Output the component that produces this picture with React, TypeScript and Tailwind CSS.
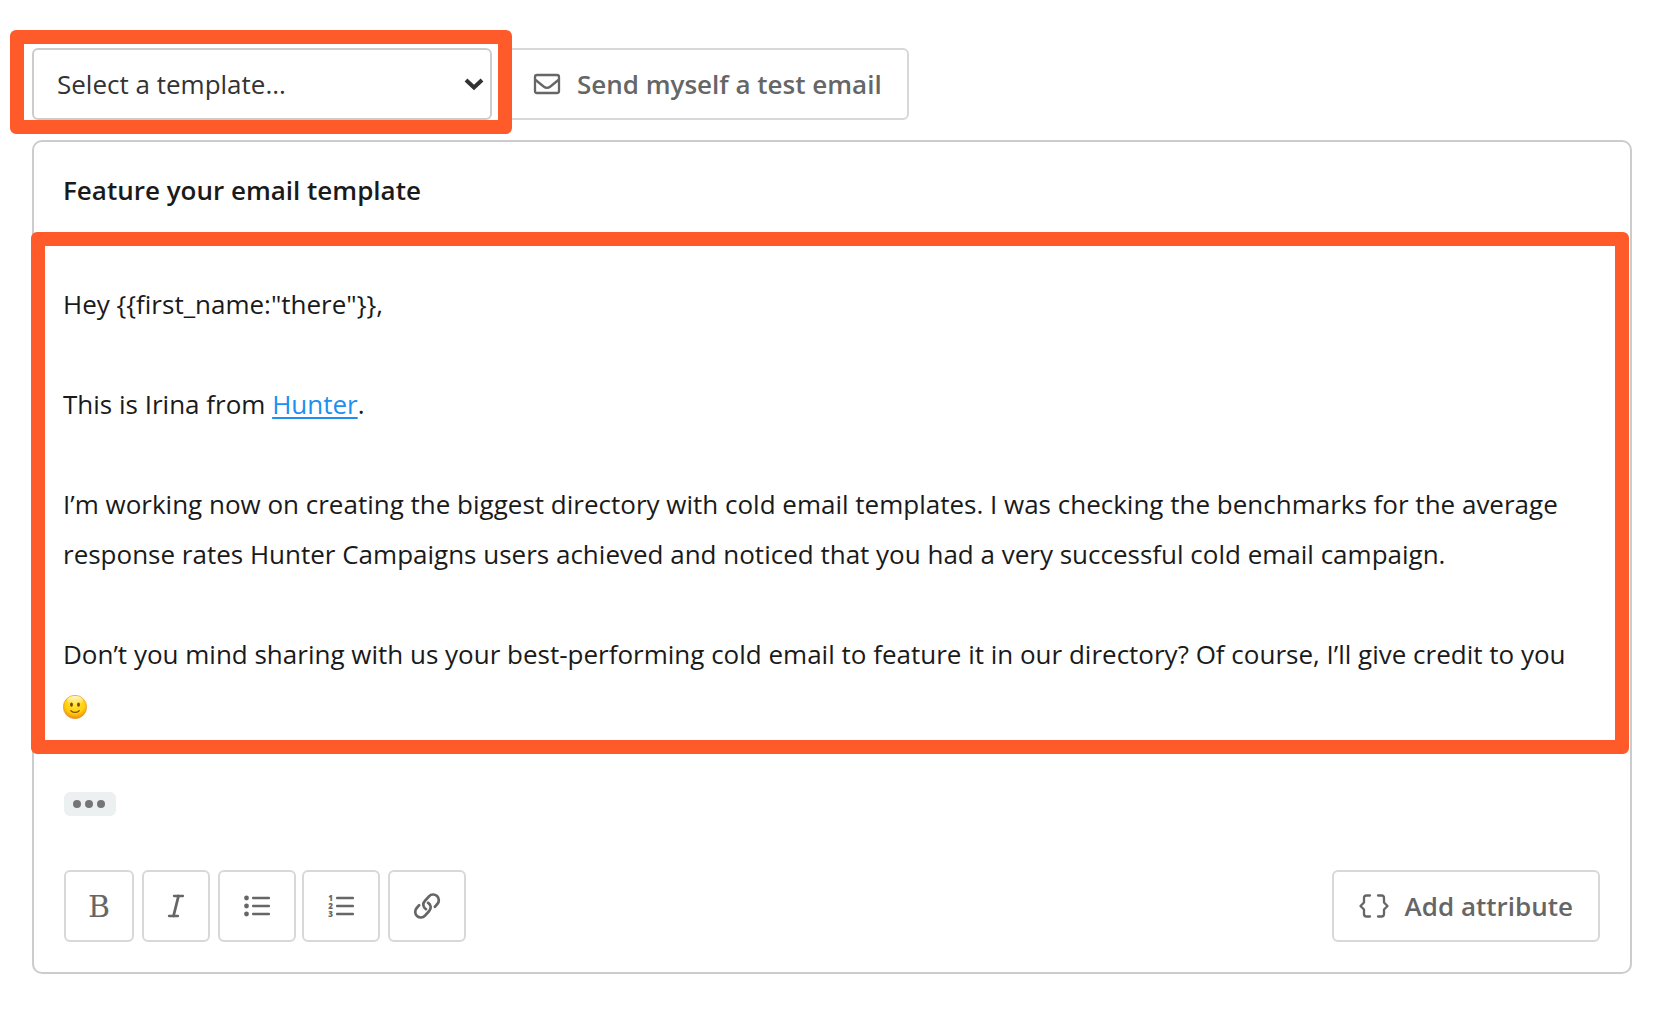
import React, { useState } from "react";

const toolButton = "h-[72px] flex items-center justify-center rounded-md border-2 border-[#d8d8d8] bg-white text-[#666]";

function EnvelopeIcon() {
  return (
    <svg width="28" height="22" viewBox="0 0 28 22" fill="none" stroke="currentColor" strokeWidth="2.3" aria-hidden="true">
      <rect x="2" y="2" width="24" height="18" rx="2" />
      <path d="M2 6.500l8.600 7c2.200 1.700 4.600 1.700 6.800 0L26 6.500" />
    </svg>
  );
}

function ItalicIcon() {
  return (
    <svg width="18" height="24" viewBox="0 0 18 24" fill="none" stroke="currentColor" strokeWidth="2.3" strokeLinecap="round" aria-hidden="true">
      <line x1="7" y1="2" x2="16" y2="2" />
      <line x1="11.500" y1="2" x2="6.500" y2="22" strokeWidth="2.800" />
      <line x1="2" y1="22" x2="11" y2="22" />
    </svg>
  );
}

function BulletListIcon() {
  return (
    <svg width="28" height="24" viewBox="0 0 28 24" fill="currentColor" aria-hidden="true">
      {[4, 12, 20].map((y) => (
        <g key={y}>
          <circle cx="3.5" cy={y} r="2.4" />
          <rect x="9" y={y - 1.2} width="18" height="2.5" rx="1" />
        </g>
      ))}
    </svg>
  );
}

function NumberListIcon() {
  return (
    <svg width="28" height="28" viewBox="0 -2 28 28" fill="currentColor" aria-hidden="true">
      {[4, 12, 20].map((y, i) => (
        <g key={y}>
          <text x="3.5" y={y + 3} textAnchor="middle" className="font-['Open_Sans',sans-serif] text-[8px] font-extrabold">
            {i + 1}
          </text>
          <rect x="9" y={y - 1.2} width="18" height="2.5" rx="1" />
        </g>
      ))}
    </svg>
  );
}

function LinkIcon() {
  return (
    <svg width="28" height="28" viewBox="0 0 28 28" fill="none" stroke="currentColor" strokeWidth="2.7" strokeLinecap="round" aria-hidden="true">
      <path d="M13 17.200A5.200 5.200 0 0 1 11.800 9L16 4.300A5.600 5.600 0 0 1 24.300 12L21.800 14.800" />
      <path d="M15 10.800A5.200 5.200 0 0 1 16.200 19L12 23.700A5.600 5.600 0 0 1 3.700 16L6.200 13.200" />
    </svg>
  );
}

function BracesIcon() {
  return (
    <svg width="30" height="24" viewBox="0 0 30 24" fill="none" stroke="currentColor" strokeWidth="2.3" strokeLinecap="round" strokeLinejoin="round" aria-hidden="true">
      <path d="M11 1.5H7.5Q5 1.5 5 4V8.5L1.5 12L5 15.5V20Q5 22.5 7.5 22.5H11" />
      <path d="M19 1.5H22.5Q25 1.5 25 4V8.5L28.5 12L25 15.5V20Q25 22.5 22.5 22.5H19" />
    </svg>
  );
}

function SmileIcon() {
  return (
    <svg width="24" height="24" viewBox="0 0 24 24" role="img" aria-label="Smile" className="inline-block align-middle">
      <defs>
        <radialGradient id="face" cx="0.5" cy="0.35" r="0.65">
          <stop offset="0" stopColor="#ffe93a" />
          <stop offset="0.65" stopColor="#ffce0a" />
          <stop offset="1" stopColor="#ee8d12" />
        </radialGradient>
        <linearGradient id="shine" x1="0" y1="0" x2="0" y2="1">
          <stop offset="0" stopColor="#fff" stopOpacity="0.8" />
          <stop offset="1" stopColor="#fff" stopOpacity="0" />
        </linearGradient>
      </defs>
      <circle cx="12" cy="12" r="11.7" fill="url(#face)" stroke="#e5942b" strokeWidth="0.6" />
      <ellipse cx="12" cy="5.5" rx="8" ry="4.5" fill="url(#shine)" />
      <ellipse cx="8.5" cy="9.7" rx="1.4" ry="2.1" fill="#7b4109" />
      <ellipse cx="15.5" cy="9.7" rx="1.4" ry="2.1" fill="#7b4109" />
      <path d="M7.8 15.7Q12 19.2 16.2 15.7" fill="none" stroke="#8b4c08" strokeWidth="1.2" strokeLinecap="round" />
    </svg>
  );
}

export default function App() {
  const [subject, setSubject] = useState("Feature your email template");

  return (
    <main className="min-h-screen bg-white pt-12 pr-10 pb-12 pl-8 font-['Open_Sans',sans-serif] text-[26px] text-[#1a1a1a]">
      {/* Template bar */}
      <div className="flex items-center gap-3.5">
        <div className="relative w-[460px]">
          <select
            aria-label="Template"
            className="block h-[72px] w-full appearance-none rounded-md border-2 border-[#ccc] bg-white pr-12 pl-[23px] text-[#333]"
          >
            <option>Select a template...</option>
          </select>
          <svg width="20" height="14" viewBox="0 0 20 14" fill="none" stroke="#333" strokeWidth="4" className="pointer-events-none absolute top-[29px] right-2" aria-hidden="true">
            <path d="M2 3L10 10.5L18 3" />
          </svg>
          <div className="pointer-events-none absolute -top-[18px] -right-5 -bottom-[14px] -left-[22px] z-10 rounded-md border-14 border-[#ff5a2a]" />
        </div>
        <button className="flex h-[72px] items-center gap-4 rounded-md border-2 border-[#d8d8d8] bg-white px-[25px] font-semibold text-[#666]">
          <EnvelopeIcon />
          Send myself a test email
        </button>
      </div>

      {/* Editor */}
      <section className="mt-5 rounded-[10px] border-2 border-[#ccc]">
        <input
          aria-label="Subject"
          value={subject}
          onChange={(e) => setSubject(e.target.value)}
          className="block h-[90px] w-full px-[29px] pt-1.5 font-semibold outline-none"
        />
        <div className="relative pt-[47px] pb-[25px]">
          <div
            role="textbox"
            aria-label="Message"
            aria-multiline="true"
            contentEditable
            suppressContentEditableWarning
            className="flex flex-col gap-[50px] pr-12 pl-[29px] leading-[50px] outline-none"
          >
            <p>Hey {'{{first_name:"there"}}'},</p>
            <p>
              This is Irina from <a href="#" className="text-[#1d8ff0] underline decoration-2 underline-offset-3">Hunter</a>.
            </p>
            <p>
              I’m working now on creating the biggest directory with cold email templates. I was checking the benchmarks for the average
              response rates Hunter Campaigns users achieved and noticed that you had a very successful cold email campaign.
            </p>
            <p>
              Don’t you mind sharing with us your best-performing cold email to feature it in our directory? Of course, I’ll give credit to you{" "}
              <SmileIcon />
            </p>
          </div>
          <div className="pointer-events-none absolute inset-y-0 right-px -left-[3px] z-10 rounded-md border-14 border-[#ff5a2a]" />
        </div>

        <div className="px-[30px] pt-[38px] pb-[30px]">
          <button aria-label="Show signature" className="flex h-6 w-[52px] items-center gap-1 rounded-md bg-[#ecf0f1] pl-[9px]">
            {[0, 1, 2].map((i) => (
              <span key={i} className="size-2 rounded-full bg-[#757575]" />
            ))}
          </button>
          <div className="mt-[54px] flex items-center justify-between">
            <div className="flex gap-1.5">
              <div className="flex gap-2">
                <button aria-label="Bold" className={`${toolButton} w-[70px] font-['DejaVu_Serif',serif] text-[30px]`}>B</button>
                <button aria-label="Italic" className={`${toolButton} w-[68px]`}><ItalicIcon /></button>
                <button aria-label="Bulleted list" className={`${toolButton} w-[78px]`}><BulletListIcon /></button>
              </div>
              <div className="flex gap-2">
                <button aria-label="Numbered list" className={`${toolButton} w-[78px]`}><NumberListIcon /></button>
                <button aria-label="Insert link" className={`${toolButton} w-[78px]`}><LinkIcon /></button>
              </div>
            </div>
            <button className={`${toolButton} gap-4 px-[25px] font-semibold`}>
              <BracesIcon />
              Add attribute
            </button>
          </div>
        </div>
      </section>
    </main>
  );
}
